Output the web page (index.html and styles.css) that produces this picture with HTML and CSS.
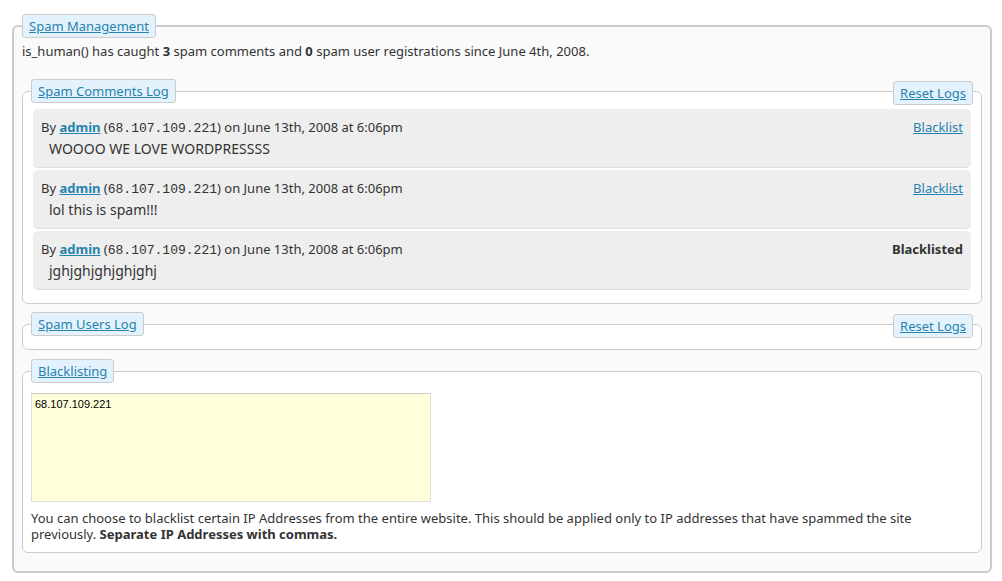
FILE: index.html
```html
<!DOCTYPE html>
<html lang="en">
<head>
<meta charset="utf-8">
<title>Spam Management</title>
<link rel="stylesheet" href="styles.css">
</head>
<body>
<form>
<fieldset class="panel">
  <legend class="tab"><a href="#manage">Spam Management</a></legend>
  <p class="summary">is_human() has caught <strong>3</strong> spam comments and <strong>0</strong> spam user registrations since June 4th, 2008.</p>
  <fieldset class="box">
    <legend class="tab"><a href="#comments">Spam Comments Log</a></legend>
    <a class="tab reset" href="#reset-comments">Reset Logs</a>
    <ul class="log">
      <li class="entry">
        <div class="meta"><span>By <a class="author" href="#admin">admin</a> (<code>68.107.109.221</code>) on June 13th, 2008 at 6:06pm</span><a href="#blacklist-1">Blacklist</a></div>
        <p class="comment">WOOOO WE LOVE WORDPRESSSS</p>
      </li>
      <li class="entry">
        <div class="meta"><span>By <a class="author" href="#admin">admin</a> (<code>68.107.109.221</code>) on June 13th, 2008 at 6:06pm</span><a href="#blacklist-2">Blacklist</a></div>
        <p class="comment">lol this is spam!!!</p>
      </li>
      <li class="entry">
        <div class="meta"><span>By <a class="author" href="#admin">admin</a> (<code>68.107.109.221</code>) on June 13th, 2008 at 6:06pm</span><strong>Blacklisted</strong></div>
        <p class="comment">jghjghjghjghjghj</p>
      </li>
    </ul>
  </fieldset>
  <fieldset class="box">
    <legend class="tab"><a href="#users">Spam Users Log</a></legend>
    <a class="tab reset" href="#reset-users">Reset Logs</a>
  </fieldset>
  <fieldset class="box form-box">
    <legend class="tab"><a id="blacklist-label" href="#blacklisting">Blacklisting</a></legend>
    <textarea class="addresses" aria-labelledby="blacklist-label" aria-describedby="blacklist-help">68.107.109.221</textarea>
    <p class="help" id="blacklist-help">You can choose to blacklist certain IP Addresses from the entire website. This should be applied only to IP addresses that have spammed the site previously. <strong>Separate IP Addresses with commas.</strong></p>
  </fieldset>
</fieldset>
</form>
</body>
</html>
```
FILE: styles.css
```css
* {
  box-sizing: border-box;
}

body {
  margin: 0;
  padding: 14px 10px 8px 12px;
  background: #fff;
  color: #333;
  font: 13px/16px "Noto Sans", "Open Sans", sans-serif;
}

a {
  color: #2583ad;
}

p,
ul {
  margin: 0;
  padding: 0;
}

.panel {
  min-width: 0;
  margin: 0;
  padding: 0 8px 18px;
  border: 2px solid #ccc;
  border-radius: 6px;
  background: #fafafa;
}

.tab {
  padding: 3px 6px;
  border: 1px solid #ccc;
  border-radius: 3px;
  background: #e4f2fd;
}

.summary {
  padding: 5px 0 20px;
}

.box {
  position: relative;
  min-width: 0;
  margin: 0;
  padding: 0 8px 13px;
  border: 1px solid #ccc;
  border-radius: 6px;
  background: #fff;
}

.box + .box {
  margin-top: 8px;
}

.box.form-box {
  margin-top: 9px;
  padding-bottom: 10px;
}

.reset {
  position: absolute;
  top: -22px;
  right: 8px;
}

.log {
  display: flex;
  flex-direction: column;
  gap: 2px;
  padding: 6px 2px 0;
  list-style: none;
}

.entry {
  padding: 8px 8px 6px;
  border-bottom: 1px solid #ddd;
  border-radius: 5px;
  background: #eee;
}

.meta {
  display: flex;
  justify-content: space-between;
  line-height: 20px;
}

.author {
  font-weight: bold;
}

code {
  font: 13px/16px "Liberation Mono", monospace;
}

.comment {
  padding-left: 8px;
  font-size: 14px;
  line-height: 24px;
}

.addresses {
  display: block;
  width: 400px;
  max-width: 100%;
  height: 109px;
  margin: 10px 0 8px;
  padding: 4px 3px;
  border: 1px solid #ddd;
  border-top-color: #ccc;
  background: #ffffdc;
  color: #000;
  font: 11px/13px "Liberation Sans", sans-serif;
  resize: none;
}

.help {
  line-height: 16px;
}
```
